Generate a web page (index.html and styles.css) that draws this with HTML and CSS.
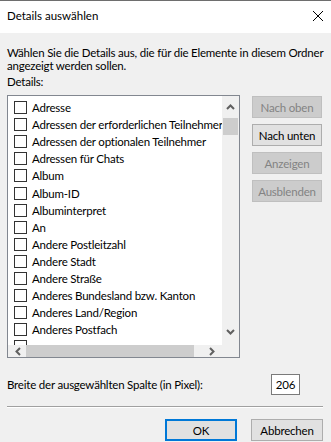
FILE: index.html
```html
<!DOCTYPE html>
<html lang="de">
<head>
    <meta charset="UTF-8">
    <title>Details auswählen</title>
    <link rel="stylesheet" href="styles.css">
</head>
<body>

    <div class="dialog">
        <div class="titlebar">
            <span class="title">Details auswählen</span>
            <svg class="close" width="10" height="10" viewBox="0 0 10 10">
                <path d="M0 0 L10 10 M10 0 L0 10" stroke="#000" stroke-width="1" fill="none"/>
            </svg>
        </div>

        <div class="content">
            <p class="intro">Wählen Sie die Details aus, die für die Elemente in diesem Ordner<br>angezeigt werden sollen.</p>
            <div class="label">Details:</div>

            <div class="main">
                <div class="listbox">
                    <div class="list-area">
                        <ul class="items">
                            <li><span class="check"></span>Adresse</li>
                            <li><span class="check"></span>Adressen der erforderlichen Teilnehmer</li>
                            <li><span class="check"></span>Adressen der optionalen Teilnehmer</li>
                            <li><span class="check"></span>Adressen für Chats</li>
                            <li><span class="check"></span>Album</li>
                            <li><span class="check"></span>Album-ID</li>
                            <li><span class="check"></span>Albuminterpret</li>
                            <li><span class="check"></span>An</li>
                            <li><span class="check"></span>Andere Postleitzahl</li>
                            <li><span class="check"></span>Andere Stadt</li>
                            <li><span class="check"></span>Andere Straße</li>
                            <li><span class="check"></span>Anderes Bundesland bzw. Kanton</li>
                            <li><span class="check"></span>Anderes Land/Region</li>
                            <li><span class="check"></span>Anderes Postfach</li>
                            <li><span class="check"></span></li>
                        </ul>
                        <div class="vscroll">
                            <svg class="arrow" width="9" height="6" viewBox="0 0 9 6">
                                <polyline points="1,5 4.5,1.5 8,5" stroke="#606060" stroke-width="2" fill="none"/>
                            </svg>
                            <div class="vthumb"></div>
                            <div class="spacer"></div>
                            <svg class="arrow" width="9" height="6" viewBox="0 0 9 6">
                                <polyline points="1,1 4.5,4.5 8,1" stroke="#606060" stroke-width="2" fill="none"/>
                            </svg>
                        </div>
                    </div>
                    <div class="hscroll">
                        <svg class="harrow" width="6" height="9" viewBox="0 0 6 9">
                            <polyline points="5,1 1.5,4.5 5,8" stroke="#606060" stroke-width="2" fill="none"/>
                        </svg>
                        <div class="hthumb"></div>
                        <div class="spacer"></div>
                        <svg class="harrow" width="6" height="9" viewBox="0 0 6 9">
                            <polyline points="1,1 4.5,4.5 1,8" stroke="#606060" stroke-width="2" fill="none"/>
                        </svg>
                        <div class="corner"></div>
                    </div>
                </div>

                <div class="side-buttons">
                    <div class="btn disabled">Nach oben</div>
                    <div class="btn">Nach unten</div>
                    <div class="btn disabled">Anzeigen</div>
                    <div class="btn disabled">Ausblenden</div>
                </div>
            </div>

            <div class="width-row">
                <span>Breite der ausgewählten Spalte (in Pixel):</span>
                <div class="field">206</div>
            </div>

            <div class="separator"></div>

            <div class="footer">
                <div class="btn action default">OK</div>
                <div class="btn action">Abbrechen</div>
            </div>
        </div>
    </div>

</body>
</html>
```

FILE: styles.css
```css
body {
    margin: 0;
    font-family: Lato, "Noto Sans", sans-serif;
    font-size: 11.5px;
    letter-spacing: -0.2px;
    color: #000;
    background-color: #f0f0f0;
}
.dialog {
    width: 331px;
    height: 442px;
    border-top: 1px solid #6e6e6e;
    box-sizing: border-box;
    background-color: #f0f0f0;
    overflow: hidden;
}
.titlebar {
    height: 32px;
    background-color: #fff;
    display: flex;
    align-items: center;
    justify-content: space-between;
    padding: 0 7px 0 7px;
}
.title {
    margin-top: -3px;
    letter-spacing: 0;
}
.close {
    margin-top: -3px;
    margin-right: 1px;
}
.content {
    padding: 13px 8px 0 7px;
}
.intro {
    margin: 0;
    line-height: 13px;
    white-space: nowrap;
}
.label {
    margin-top: 3px;
    line-height: 13px;
}
.main {
    display: flex;
    margin-top: 7px;
}
.listbox {
    width: 231px;
    height: 261px;
    border: 1px solid #828790;
    background-color: #fff;
    display: flex;
    flex-direction: column;
}
.list-area {
    flex: 1;
    display: flex;
    overflow: hidden;
}
.items {
    list-style: none;
    margin: 0;
    padding: 3px 0 0 0;
    flex: 1;
    overflow: hidden;
}
.items li {
    height: 17.1px;
    display: flex;
    align-items: center;
    white-space: nowrap;
}
.check {
    width: 11px;
    height: 11px;
    border: 1px solid #333;
    background-color: #fff;
    margin: 0 5px 0 6px;
    flex-shrink: 0;
}
.vscroll {
    width: 17px;
    background-color: #f0f0f0;
    display: flex;
    flex-direction: column;
    align-items: center;
}
.vscroll .arrow {
    margin: 8px 0;
}
.vscroll .arrow:last-child {
    margin: 8px 0 10px 0;
}
.vthumb {
    width: 15px;
    height: 17px;
    background-color: #cdcdcd;
}
.spacer {
    flex: 1;
}
.hscroll {
    height: 12px;
    background-color: #f0f0f0;
    display: flex;
    align-items: center;
}
.harrow {
    margin: 0 6px 0 7px;
}
.hthumb {
    width: 168px;
    height: 12px;
    background-color: #cdcdcd;
    margin-left: -1px;
}
.hscroll .harrow:nth-of-type(2) {
    margin: 0 7px 0 0;
}
.corner {
    width: 17px;
    height: 12px;
}
.side-buttons {
    display: flex;
    flex-direction: column;
    gap: 6px;
    margin-left: 12px;
    margin-top: 1px;
}
.btn {
    width: 68px;
    height: 20px;
    border: 1px solid #adadad;
    background-color: #e1e1e1;
    display: flex;
    align-items: center;
    justify-content: center;
}
.btn.disabled {
    background-color: #cccccc;
    border-color: #bfbfbf;
    color: #838383;
}
.width-row {
    display: flex;
    align-items: center;
    justify-content: space-between;
    margin-top: 16px;
    padding-right: 23px;
}
.field {
    width: 27px;
    height: 19px;
    border: 1px solid #7a7a7a;
    background-color: #fff;
    display: flex;
    align-items: center;
    justify-content: center;
}
.separator {
    height: 1px;
    background-color: #a0a0a0;
    border-bottom: 1px solid #fff;
    margin-top: 11px;
}
.footer {
    display: flex;
    justify-content: flex-end;
    gap: 14px;
    margin-top: 11px;
}
.btn.action {
    width: 70px;
    height: 20px;
}
.btn.default {
    border: 2px solid #0078d7;
    width: 68px;
    height: 18px;
}
```
